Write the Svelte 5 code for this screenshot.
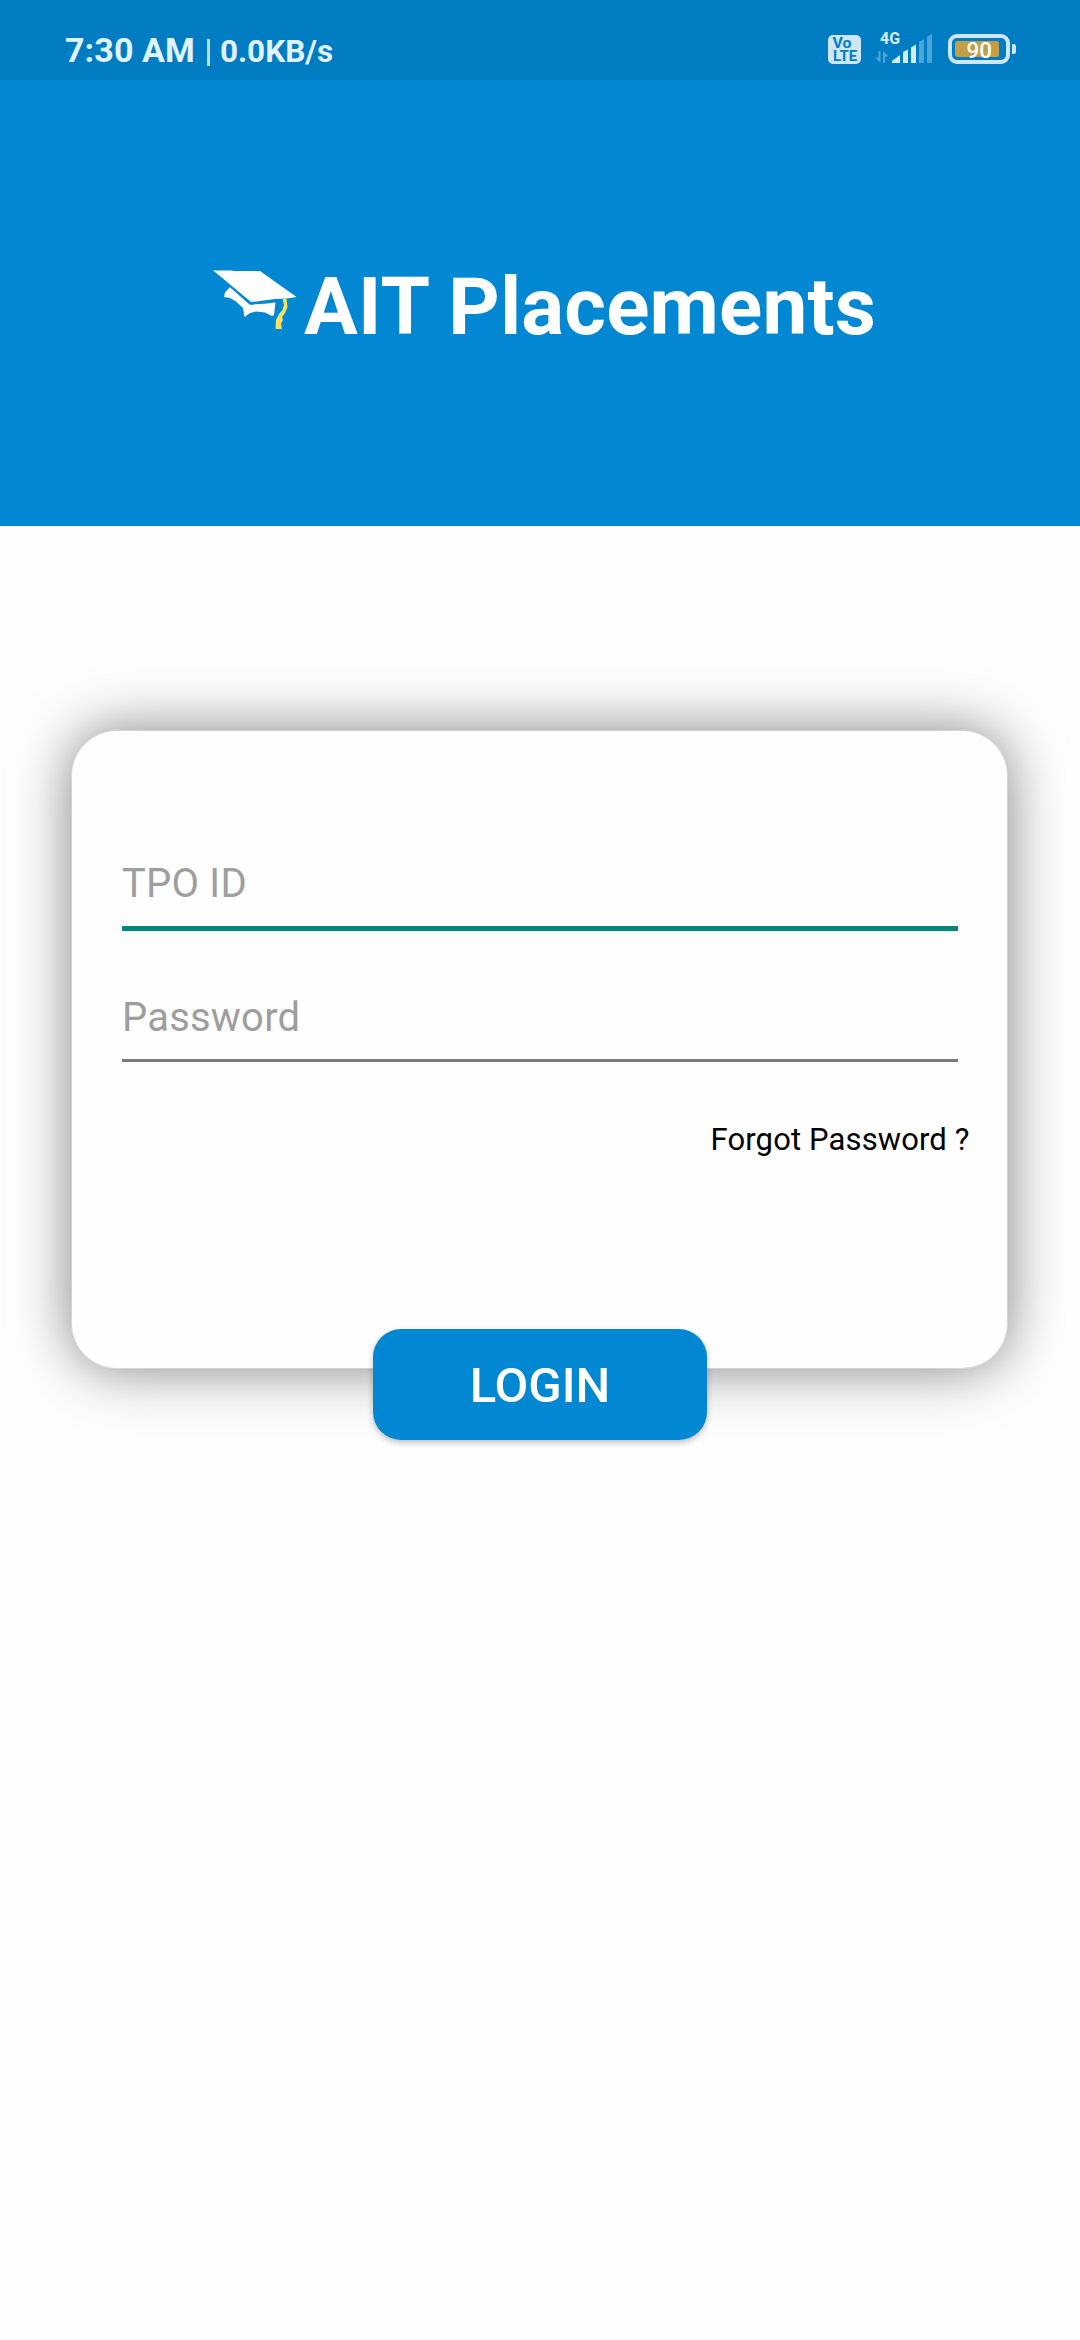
<script>
  let tpoId = $state('');
  let password = $state('');
</script>

<main class="screen">
  <header class="hero">
    <div class="status">
      <div class="status-left">
        <span class="clock">7:30 AM</span>
        <span class="divider"></span>
        <span class="speed">0.0KB/s</span>
      </div>
      <svg class="status-icons" viewBox="0 0 230 60" aria-hidden="true">
        <rect x="18" y="15" width="33" height="29" rx="5" fill="#cde7f6" />
        <text class="volte" x="22.5" y="27.500" textLength="19" lengthAdjust="spacingAndGlyphs">Vo</text>
        <text class="volte" x="23" y="41" textLength="24" lengthAdjust="spacingAndGlyphs">LTE</text>
        <text class="net" x="70" y="24" textLength="20" lengthAdjust="spacingAndGlyphs">4G</text>
        <g fill="#4aa5d8">
          <path d="M68.500 31h2v12l-5.500-5.500h3.500zM73 43V31l5.500 5.500h-3.300V43z" />
          <path d="M109 22l5-3V43h-5zM117 17l5-3.500V43h-5z" />
        </g>
        <path d="M82 43v-2l8-6V43zM93 32l5-2.500V43h-5zM101 27.500l5-3V43h-5z" fill="#d6ecf8" />
        <rect x="140" y="16" width="58" height="26" rx="7" fill="none" stroke="#cde7f6" stroke-width="4" />
        <path d="M202 24h1.500q2.500 0 2.500 2.500v5q0 2.500-2.500 2.500H202z" fill="#cde7f6" />
        <rect x="145" y="21" width="44" height="16" rx="2.500" fill="#c59d45" />
        <text class="level" x="156.500" y="37.500" textLength="25.500" lengthAdjust="spacingAndGlyphs">90</text>
      </svg>
    </div>
    <div class="brand">
      <svg class="cap" viewBox="0 0 84 62" aria-hidden="true">
        <path d="M0 .5h19L20 1h27l36.500 26-9.500 1.500-12 .5-24 3z" fill="#fff" />
        <path d="M17 17l19.500 17.500 15-.7 11-1.300-1.500 12.500-2 1-7-3.500-9-1-6 1.500-5.500 4-1.500-9-7-6.500-6-3.500-6-1 1-4.500z" fill="#fff" />
        <path d="M0 .5L38 32.500l24-3.300" transform="translate(0 1.200)" fill="none" stroke="#0288d3" stroke-width="1.800" />
        <path d="M69.500 29h4l1 8-2.500 6-3 4 1 3-2 3.500 1 5.500h-6.500l.5-9 3-6 3.500-4 1.500-5z" fill="#fae260" />
      </svg>
      <h1>AIT Placements</h1>
    </div>
  </header>

  <form class="card" onsubmit={(e) => e.preventDefault()}>
    <input class="field active" placeholder="TPO ID" aria-label="TPO ID" bind:value={tpoId} />
    <input class="field" type="password" placeholder="Password" aria-label="Password" bind:value={password} />
    <a class="forgot" href="#forgot">Forgot Password ?</a>
    <button class="login" type="submit">LOGIN</button>
  </form>
</main>

<style>
  :global(body) {
    margin: 0;
    background: #fefefe;
  }
  .screen {
    box-sizing: border-box;
    width: 1080px;
    height: 2340px;
    overflow: hidden;
    background: #fefefe;
    font-family: Roboto, sans-serif;
  }
  .hero {
    height: 526px;
    background: #0288d3;
  }
  .status {
    box-sizing: border-box;
    height: 80px;
    padding: 20px 40px 0 65px;
    display: flex;
    justify-content: space-between;
    align-items: flex-start;
    background: #007dc2;
    color: #e0f3ff;
  }
  .status-left {
    display: flex;
    align-items: baseline;
    line-height: 61px;
    font-weight: 700;
    white-space: pre;
  }
  .clock {
    font-size: 34px;
    letter-spacing: 0.1px;
  }
  .divider {
    width: 3px;
    height: 27px;
    margin: 19px 10px 0 12px;
    align-self: flex-start;
    background: #b9dff5;
  }
  .speed {
    font-size: 31.500px;
  }
  .status-icons {
    flex: none;
    width: 230px;
    height: 60px;
  }
  .volte {
    font: 700 14.500px Roboto, sans-serif;
    fill: #007dc2;
  }
  .net {
    font: 700 16px Roboto, sans-serif;
    fill: #d6ecf8;
  }
  .level {
    font: 500 22.500px Roboto, sans-serif;
    fill: #fff;
  }
  .brand {
    display: flex;
    align-items: flex-start;
    padding: 190px 0 0 213px;
  }
  .cap {
    flex: none;
    width: 84px;
    height: 62px;
  }
  h1 {
    margin: -10px 0 0 7px;
    font-size: 80px;
    line-height: 94px;
    font-weight: 700;
    letter-spacing: 0.2px;
    color: #fff;
    white-space: nowrap;
  }
  .card {
    position: relative;
    box-sizing: border-box;
    width: 935px;
    height: 637px;
    margin: 205px 0 0 71.500px;
    padding: 122px 48px 0 50.500px;
    display: flex;
    flex-direction: column;
    border-radius: 45px;
    background: #fefefe;
    box-shadow:
      0 0 0 1px rgba(255, 255, 255, 0.3),
      0 0 58px rgba(0, 0, 0, 0.5);
  }
  .field {
    box-sizing: border-box;
    width: 836px;
    height: 75px;
    margin: 0;
    padding: 0 0 12px;
    border: 0;
    border-bottom: 3px solid #7b7b7b;
    border-radius: 0;
    outline: 0;
    background: transparent;
    font: 400 40px/60px Roboto, sans-serif;
    letter-spacing: 0.2px;
    color: #222;
  }
  .field.active {
    height: 78px;
    margin-bottom: 56px;
    border-bottom: 5.500px solid #04877a;
  }
  .field::placeholder {
    color: #9e9e9e;
    opacity: 1;
  }
  .forgot {
    align-self: flex-end;
    margin: 60px -11px 0 0;
    font-size: 31px;
    line-height: 36px;
    letter-spacing: 0.12px;
    color: #000;
    text-decoration: none;
    white-space: nowrap;
  }
  .login {
    position: absolute;
    left: 301.500px;
    top: 598px;
    width: 334px;
    height: 111px;
    padding: 2px 0 0;
    border: 0;
    border-radius: 28px;
    background: #0288d3;
    color: #fff;
    font: 500 49px/109px Roboto, sans-serif;
    box-shadow: 0 3px 6px rgba(0, 0, 0, 0.24);
  }
</style>
